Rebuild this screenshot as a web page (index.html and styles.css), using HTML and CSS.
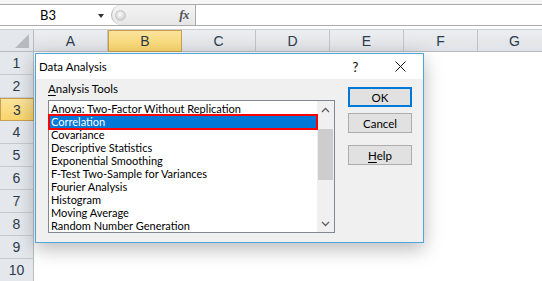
FILE: index.html
```html
<!DOCTYPE html>
<html>
<head>
<meta charset="utf-8">
<link rel="stylesheet" href="styles.css">
</head>
<body>
<div class="app">
  <div class="toolbar">
    <div class="bar">
      <div class="namebox"><span class="nb-text">B3</span><span class="nb-arrow"></span></div>
      <div class="fxzone"><span class="knob"></span><span class="fx">fx</span></div>
      <div class="formula"></div>
    </div>
  </div>
  <div class="sheet">
    <div class="colheads">
      <div class="corner"><span class="tri"></span></div>
      <div class="ch">A</div>
      <div class="ch sel">B</div>
      <div class="ch">C</div>
      <div class="ch">D</div>
      <div class="ch">E</div>
      <div class="ch">F</div>
      <div class="ch">G</div>
    </div>
    <div class="rowheads">
      <div class="rh">1</div>
      <div class="rh">2</div>
      <div class="rh sel">3</div>
      <div class="rh">4</div>
      <div class="rh">5</div>
      <div class="rh">6</div>
      <div class="rh">7</div>
      <div class="rh">8</div>
      <div class="rh">9</div>
      <div class="rh">10</div>
    </div>
  </div>

  <div class="dialog">
    <div class="titlebar">
      <span class="title">Data Analysis</span>
      <span class="tb-btn help-q">?</span>
      <span class="tb-btn close">
        <svg width="11" height="11" viewBox="0 0 11 11"><path d="M0.5 0.5 L10.5 10.5 M10.5 0.5 L0.5 10.5" stroke="#1a1a1a" stroke-width="1" fill="none"/></svg>
      </span>
    </div>
    <div class="dbody">
      <div class="leftcol">
        <div class="label"><u>A</u>nalysis Tools</div>
        <div class="listbox">
          <div class="items">
            <div class="item">Anova: Two-Factor Without Replication</div>
            <div class="item selected"><span>Correlation</span></div>
            <div class="item">Covariance</div>
            <div class="item">Descriptive Statistics</div>
            <div class="item">Exponential Smoothing</div>
            <div class="item">F-Test Two-Sample for Variances</div>
            <div class="item">Fourier Analysis</div>
            <div class="item">Histogram</div>
            <div class="item">Moving Average</div>
            <div class="item">Random Number Generation</div>
          </div>
          <div class="scrollbar">
            <div class="sb-arrow">
              <svg width="9" height="6" viewBox="0 0 9 6"><path d="M1 5 L4.5 1.5 L8 5" stroke="#606060" stroke-width="1.3" fill="none"/></svg>
            </div>
            <div class="sb-track"><div class="sb-thumb"></div></div>
            <div class="sb-arrow">
              <svg width="9" height="6" viewBox="0 0 9 6"><path d="M1 1 L4.5 4.5 L8 1" stroke="#606060" stroke-width="1.3" fill="none"/></svg>
            </div>
          </div>
        </div>
      </div>
      <div class="buttons">
        <div class="btn default">OK</div>
        <div class="btn">Cancel</div>
        <div class="btn gap"><u>H</u>elp</div>
      </div>
    </div>
  </div>
</div>
</body>
</html>
```

FILE: styles.css
```css
* { box-sizing: border-box; }
html, body { margin: 0; padding: 0; background: #ffffff; }
.app {
  position: relative;
  width: 542px;
  height: 281px;
  overflow: hidden;
  background: #ffffff;
  font-family: "Liberation Sans", Arial, sans-serif;
}

/* formula toolbar */
.toolbar {
  height: 29px;
  padding-top: 4px;
  background: linear-gradient(#f6f6f6, #f6f6f6 4px, #ffffff 4px);
}
.bar {
  display: flex;
  height: 22px;
  border-top: 1px solid #a9abae;
  border-bottom: 1px solid #a9abae;
  background: #ffffff;
}
.namebox {
  width: 111px;
  flex-shrink: 0;
  display: flex;
  align-items: center;
  position: relative;
}
.nb-text {
  margin-left: 40px;
  font-family: "Lato", "Liberation Sans", sans-serif;
  font-size: 13px;
  color: #000;
}
.nb-arrow {
  position: absolute;
  left: 98px;
  top: 9px;
  width: 0; height: 0;
  border-left: 3.5px solid transparent;
  border-right: 3.5px solid transparent;
  border-top: 4px solid #333;
}
.fxzone {
  width: 85px;
  flex-shrink: 0;
  display: flex;
  align-items: center;
  justify-content: space-between;
  background: linear-gradient(#f4f4f4, #e6e6e6);
  border-left: 1px solid #b9b9b9;
  border-right: 1px solid #a9abae;
  border-radius: 12px 0 0 12px;
  padding: 0 6px 0 3px;
}
.knob {
  width: 11px; height: 11px;
  border-radius: 50%;
  background: radial-gradient(circle at 45% 40%, #ffffff, #d0d0d0 70%, #bdbdbd);
  border: 1px solid #c9c9c9;
}
.fx {
  font-family: "Liberation Serif", "Times New Roman", serif;
  font-style: italic;
  font-weight: bold;
  font-size: 13px;
  color: #555;
  letter-spacing: -0.5px;
}
.formula { flex: 1; }

/* sheet headers */
.sheet { display: flex; flex-direction: column; }
.colheads {
  display: flex;
  height: 23px;
  border-top: 1px solid #c9ccd0;
}
.corner {
  width: 34px;
  flex-shrink: 0;
  position: relative;
  background: #e4e7eb;
  border-right: 1px solid #b8bcc2;
  border-bottom: 1px solid #b8bcc2;
}
.tri {
  position: absolute;
  right: 4px;
  bottom: 3px;
  width: 0; height: 0;
  border-left: 14px solid transparent;
  border-bottom: 14px solid #b7babf;
}
.ch {
  width: 74px;
  flex-shrink: 0;
  display: flex;
  align-items: center;
  justify-content: center;
  background: linear-gradient(#eceef1, #dfe2e6);
  border-right: 1px solid #c0c4c9;
  border-bottom: 1px solid #b8bcc2;
  font-size: 14px;
  color: #2c3b4c;
}
.ch.sel, .rh.sel {
  background: linear-gradient(#fbe39b, #f8d46a);
  border: 1px solid #c79f52;
  color: #2c3b4c;
}
.rowheads {
  display: flex;
  flex-direction: column;
  width: 34px;
}
.rh {
  height: 23px;
  display: flex;
  align-items: center;
  justify-content: center;
  background: #e4e7eb;
  border-right: 1px solid #b8bcc2;
  border-bottom: 1px solid #c7cbd0;
  font-size: 14px;
  color: #2c3b4c;
}

/* dialog */
.dialog {
  position: absolute;
  left: 35px;
  top: 53px;
  width: 389px;
  height: 190px;
  border: 1px solid #4ea6dc;
  background: #f0f0f0;
  box-shadow: 0 6px 18px rgba(0, 0, 0, 0.28);
  font-family: "Lato", "Liberation Sans", sans-serif;
  font-size: 11px;
  color: #000;
  display: flex;
  flex-direction: column;
}
.titlebar {
  height: 25px;
  background: #ffffff;
  display: flex;
  align-items: center;
  padding-left: 3px;
}
.title { flex: 1; font-size: 11.5px; }
.tb-btn {
  width: 45px;
  height: 25px;
  display: flex;
  align-items: center;
  justify-content: center;
}
.help-q { font-size: 13px; }
.dbody {
  display: flex;
  padding: 0 0 0 12px;
}
.leftcol { display: flex; flex-direction: column; }
.label {
  height: 14px;
  line-height: 14px;
  margin-top: 3px;
  margin-bottom: 4px;
  font-size: 11.5px;
}
.label u, .btn u { text-decoration-thickness: 1px; text-underline-offset: 2px; }
.listbox {
  width: 287px;
  height: 133px;
  border: 1px solid #828790;
  background: #ffffff;
  display: flex;
}
.items {
  width: 268px;
  flex-shrink: 0;
  padding-top: 1px;
}
.item {
  height: 13px;
  line-height: 13px;
  padding-left: 2px;
  white-space: nowrap;
  position: relative;
}
.item.selected { color: #ffffff; }
.item.selected::before {
  content: "";
  position: absolute;
  left: -1px;
  right: -1px;
  top: -1px;
  bottom: -2px;
  background: #0078d7;
  border: 2.5px solid #ff0000;
}
.item.selected span { position: relative; }
.scrollbar {
  width: 17px;
  display: flex;
  flex-direction: column;
  background: #f0f0f0;
}
.sb-arrow {
  height: 17px;
  display: flex;
  align-items: center;
  justify-content: center;
}
.sb-track { flex: 1; padding-top: 11px; }
.sb-thumb {
  height: 51px;
  margin: 0 1px;
  background: #cdcdcd;
}
.buttons {
  display: flex;
  flex-direction: column;
  margin-left: 13px;
  margin-top: 8px;
}
.btn {
  width: 64px;
  height: 20px;
  margin-bottom: 6px;
  background: #e1e1e1;
  border: 1px solid #adadad;
  display: flex;
  align-items: center;
  justify-content: center;
  font-size: 11.5px;
}
.btn.default { border: 2px solid #0078d7; }
.btn.gap { margin-top: 6px; }
```
